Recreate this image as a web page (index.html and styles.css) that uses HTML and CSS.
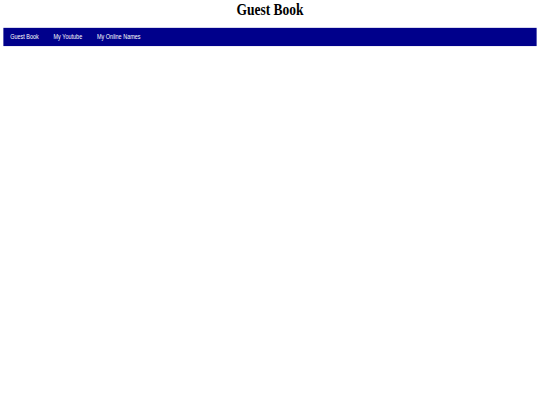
FILE: index.html
```html
<!DOCTYPE html>
<html lang="en">
<head>
<meta charset="utf-8">
<title>Guest Book</title>
<link rel="stylesheet" href="styles.css">
</head>
<body>
<div class="viewport">
  <div class="stage">
    <header class="page">
      <h1 class="title">Guest Book</h1>
      <nav class="nav">
        <a class="nav-link" href="#">Guest Book</a>
        <a class="nav-link" href="#">My Youtube</a>
        <a class="nav-link" href="#">My Online Names</a>
      </nav>
    </header>
  </div>
</div>
</body>
</html>
```

FILE: styles.css
```css
html, body {
  margin: 0;
  padding: 0;
  background: #ffffff;
  overflow: hidden;
}

.viewport {
  width: 540px;
  height: 405px;
  overflow: hidden;
}

.stage {
  width: 1280px;
  height: 800px;
  transform: scale(0.421875, 0.50625);
  transform-origin: 0 0;
}

.page {
  padding: 1px 8px 0;
}

.title {
  margin: 0 0 17px;
  font-family: "Liberation Serif", "Times New Roman", serif;
  font-weight: bold;
  font-size: 32px;
  line-height: 37px;
  text-align: center;
  color: #000000;
}

.nav {
  display: flex;
  gap: 3px;
  padding: 11px 0 10px;
  background: #00008b;
}

.nav-link {
  padding: 0 16px;
  font-family: "Liberation Sans", Arial, sans-serif;
  font-size: 13px;
  line-height: 15px;
  color: #ffffff;
  text-decoration: none;
}
```
